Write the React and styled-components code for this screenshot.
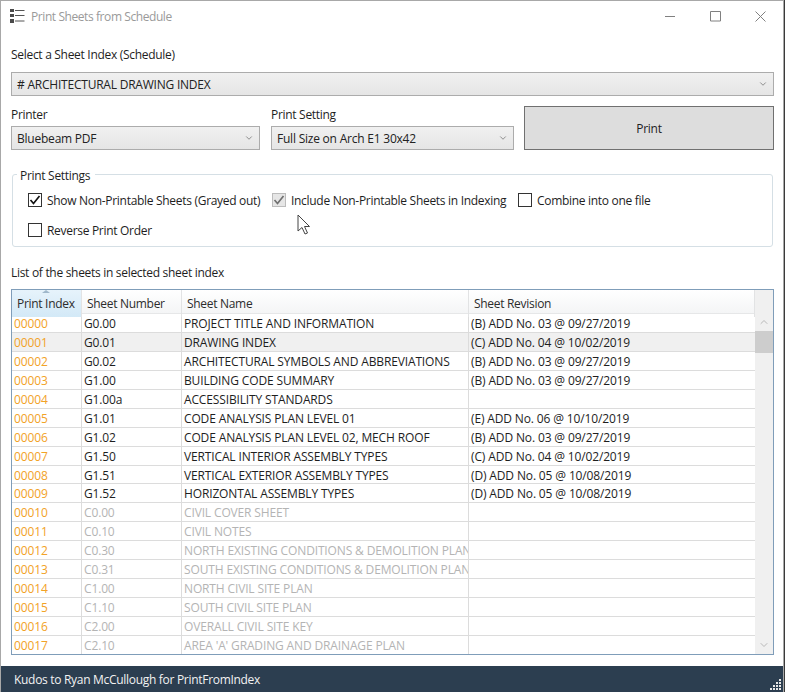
import React from 'react';
import styled, { createGlobalStyle } from 'styled-components';
import { ChevronDown, ChevronUp } from 'lucide-react';

const GlobalStyle = createGlobalStyle`
    html, body {
        margin: 0;
        padding: 0;
        background: #3a3a3a;
    }
    body {
        font-family: "Open Sans", "Liberation Sans", sans-serif;
        font-size: 12px;
        color: #1e1e1e;
    }
`;

const Frame = styled.div`
    width: 784px;
    height: 692px;
    box-sizing: border-box;
    border: 1px solid #a8a8a8;
    border-bottom: 0;
    background: #fff;
    display: flex;
    flex-direction: column;
    position: relative;
    overflow: hidden;
`;
const TitleBar = styled.div`
    height: 30px;
    flex: none;
    display: flex;
    align-items: center;
    padding-left: 9px;
`;
const TitleText = styled.span`
    margin-left: 6px;
    color: #9a9a9a;
    letter-spacing: -0.42px;
`;
const WinButtons = styled.div`
    margin-left: auto;
    display: flex;
`;
const WinButton = styled.div`
    width: 45px;
    height: 30px;
    display: flex;
    align-items: center;
    justify-content: center;
`;
const Body = styled.div`
    flex: 1;
    min-height: 0;
    padding: 15px 9px 10px 10px;
    display: flex;
    flex-direction: column;
`;
const Label = styled.div`
    height: 17px;
    line-height: 17px;
    letter-spacing: -0.3px;
`;
const Select = styled.div`
    box-sizing: border-box;
    height: 24px;
    flex: none;
    margin-top: ${p => p.$top || 0}px;
    width: ${p => p.$width ? `${p.$width}px` : '100%'};
    border: 1px solid #acacac;
    background: linear-gradient(#f0f0f0, #e5e5e5);
    display: flex;
    align-items: center;
    padding: 0 5px;
    letter-spacing: -0.22px;
    justify-content: space-between;
    color: #222;
`;
const TopRow = styled.div`
    display: flex;
    margin-top: 10px;
    gap: 11px;
    align-items: flex-end;
`;
const Field = styled.div`
    display: flex;
    flex-direction: column;
    gap: 3px;
`;
const PrintButton = styled.div`
    box-sizing: border-box;
    margin-left: -1px;
    width: 250px;
    height: 44px;
    background: #dddddd;
    border: 1px solid #707070;
    display: flex;
    align-items: center;
    justify-content: center;
    letter-spacing: -0.3px;
`;
const GroupBox = styled.fieldset`
    margin: 16px 1px 0 1px;
    padding: 0 0 0 15px;
    height: 81px;
    box-sizing: border-box;
    border: 1px solid #d5dfe5;
    border-radius: 3px;
`;
const Legend = styled.legend`
    margin-left: -11px;
    padding: 3px 5px 0 3px;
    line-height: 14px;
    letter-spacing: -0.3px;
`;
const CheckRow = styled.div`
    display: flex;
    align-items: center;
    height: 16px;
    margin-top: ${p => p.$top}px;
`;
const Check = styled.div`
    display: flex;
    align-items: center;
    width: ${p => p.$width}px;
    letter-spacing: -0.3px;
`;
const Box = styled.span`
    box-sizing: border-box;
    width: 14px;
    height: 14px;
    flex: none;
    margin-right: 5px;
    border: 1px solid ${p => p.$disabled ? '#bcbcbc' : '#333'};
    background: ${p => p.$disabled ? '#e6e6e6' : '#fff'};
    color: ${p => p.$disabled ? '#707070' : '#111'};
    display: flex;
    align-items: center;
    justify-content: center;
`;
const ListLabel = styled(Label)`
    margin-top: 17px;
`;
const Grid = styled.div`
    margin-top: 8px;
    box-sizing: border-box;
    height: 366px;
    flex: none;
    border: 1px solid #7f9db9;
    display: flex;
    position: relative;
    overflow: hidden;
`;
const Table = styled.div`
    flex: 1;
    min-width: 0;
`;
const columns = '70px 100px 287px 1fr';
const HeaderRow = styled.div`
    display: grid;
    grid-template-columns: ${columns};
    height: 23px;
    background: linear-gradient(#ffffff, #f4f5f6);
    border-bottom: 1px solid #e6e7e8;
`;
const HeaderCell = styled.div`
    position: relative;
    padding-left: 5px;
    line-height: 27px;
    color: #2c2c2c;
    letter-spacing: -0.3px;
    border-right: 1px solid #e2e3e4;
    background: ${p => p.$sorted ? 'linear-gradient(#e6f3fb, #d3e9f7)' : 'none'};
`;
const SortMark = styled.span`
    position: absolute;
    left: 30px;
    top: 0;
    width: 0;
    height: 0;
    border-left: 4px solid transparent;
    border-right: 4px solid transparent;
    border-bottom: 3px solid #9fb8cb;
`;
const Row = styled.div`
    display: grid;
    grid-template-columns: ${columns};
    height: 18.94px;
    box-sizing: border-box;
    border-bottom: 1px solid #dcdcdc;
    background: ${p => p.$active ? '#f0f0f0' : '#fff'};
    color: ${p => p.$muted ? '#b4b4b4' : '#1e1e1e'};
`;
const Cell = styled.div`
    padding-left: 2px;
    line-height: 19px;
    white-space: nowrap;
    overflow: hidden;
    letter-spacing: -0.14px;
    border-right: ${p => p.$last ? 0 : '1px solid #dcdcdc'};
`;
const IndexCell = styled(Cell)`
    color: #f2a227;
`;
const ScrollBar = styled.div`
    width: 18px;
    flex: none;
    background: #f0f0f0;
    display: flex;
    flex-direction: column;
    align-items: center;
    color: #a6a6a6;
`;
const ScrollCap = styled.div`
    height: 18px;
    flex: none;
    margin-top: ${p => p.$top || 0}px;
    display: flex;
    align-items: center;
    justify-content: center;
`;
const ScrollThumb = styled.div`
    width: 100%;
    height: 22px;
    flex: none;
    background: #cdcdcd;
`;
const ScrollTrack = styled.div`
    flex: 1;
`;
const Footer = styled.div`
    height: 26px;
    flex: none;
    background: #2c3e50;
    color: #f2f2f2;
    display: flex;
    align-items: center;
    padding-left: 13px;
    letter-spacing: -0.3px;
    position: relative;
`;
const Grip = styled.svg`
    position: absolute;
    right: 1px;
    bottom: 1px;
`;
const Pointer = styled.svg`
    position: absolute;
    left: 296px;
    top: 213px;
`;

const sheets = [
    ['G0.00', 'PROJECT TITLE AND INFORMATION', '(B) ADD No. 03 @ 09/27/2019'],
    ['G0.01', 'DRAWING INDEX', '(C) ADD No. 04 @ 10/02/2019'],
    ['G0.02', 'ARCHITECTURAL SYMBOLS AND ABBREVIATIONS', '(B) ADD No. 03 @ 09/27/2019'],
    ['G1.00', 'BUILDING CODE SUMMARY', '(B) ADD No. 03 @ 09/27/2019'],
    ['G1.00a', 'ACCESSIBILITY STANDARDS', ''],
    ['G1.01', 'CODE ANALYSIS PLAN LEVEL 01', '(E) ADD No. 06 @ 10/10/2019'],
    ['G1.02', 'CODE ANALYSIS PLAN LEVEL 02, MECH ROOF', '(B) ADD No. 03 @ 09/27/2019'],
    ['G1.50', 'VERTICAL INTERIOR ASSEMBLY TYPES', '(C) ADD No. 04 @ 10/02/2019'],
    ['G1.51', 'VERTICAL EXTERIOR ASSEMBLY TYPES', '(D) ADD No. 05 @ 10/08/2019'],
    ['G1.52', 'HORIZONTAL ASSEMBLY TYPES', '(D) ADD No. 05 @ 10/08/2019'],
    ['C0.00', 'CIVIL COVER SHEET', ''],
    ['C0.10', 'CIVIL NOTES', ''],
    ['C0.30', 'NORTH EXISTING CONDITIONS & DEMOLITION PLAN', ''],
    ['C0.31', 'SOUTH EXISTING CONDITIONS & DEMOLITION PLAN', ''],
    ['C1.00', 'NORTH CIVIL SITE PLAN', ''],
    ['C1.10', 'SOUTH CIVIL SITE PLAN', ''],
    ['C2.00', 'OVERALL CIVIL SITE KEY', ''],
    ['C2.10', "AREA 'A' GRADING AND DRAINAGE PLAN", ''],
];

const AppIcon = () => (
    <svg width="15" height="14" viewBox="0 0 15 14">
        <rect x="0" y="0" width="4" height="3" fill="#4a4a4a" />
        <rect x="0" y="5" width="4" height="3" fill="#4a4a4a" />
        <rect x="0" y="10" width="4" height="4" fill="#4a4a4a" />
        <path d="M5 1.5h9.5M5 6.5h9.5M5 12h9.5" stroke="#555" strokeWidth="1" />
    </svg>
);

const WinIcon = ({ d }) => (
    <svg width="11" height="11" viewBox="0 0 11 11">
        <path d={d} fill="none" stroke="#808080" strokeWidth="1" />
    </svg>
);

const Tick = () => (
    <svg width="12" height="12" viewBox="0 0 12 12">
        <path d="M1.5 6 4.5 9.5 10.5 2" fill="none" stroke="currentColor" strokeWidth="1.7" />
    </svg>
);

const Chevron = () => <ChevronDown size={10} strokeWidth={1.5} color="#555" />;

const CheckItem = ({ width, checked, disabled, children }) => (
    <Check $width={width}>
        <Box $disabled={disabled}>{checked && <Tick />}</Box>
        {children}
    </Check>
);

const App = () => {
    return (
        <Frame>
            <GlobalStyle />
            <TitleBar>
                <AppIcon />
                <TitleText>Print Sheets from Schedule</TitleText>
                <WinButtons>
                    <WinButton><WinIcon d="M0 5.5h10" /></WinButton>
                    <WinButton><WinIcon d="M.5.5h10v9.5H.5z" /></WinButton>
                    <WinButton><WinIcon d="M.5.5l10 10M10.5.5l-10 10" /></WinButton>
                </WinButtons>
            </TitleBar>
            <Body>
                <Label>Select a Sheet Index (Schedule)</Label>
                <Select $top={9}>
                    # ARCHITECTURAL DRAWING INDEX
                    <Chevron />
                </Select>
                <TopRow>
                    <Field>
                        <Label>Printer</Label>
                        <Select $width={249}>Bluebeam PDF<Chevron /></Select>
                    </Field>
                    <Field>
                        <Label>Print Setting</Label>
                        <Select $width={243}>Full Size on Arch E1 30x42<Chevron /></Select>
                    </Field>
                    <PrintButton>Print</PrintButton>
                </TopRow>
                <GroupBox>
                    <Legend>Print Settings</Legend>
                    <CheckRow $top={9}>
                        <CheckItem width={244} checked>Show Non-Printable Sheets (Grayed out)</CheckItem>
                        <CheckItem width={246} checked disabled>Include Non-Printable Sheets in Indexing</CheckItem>
                        <CheckItem width={200}>Combine into one file</CheckItem>
                    </CheckRow>
                    <CheckRow $top={14}>
                        <CheckItem width={200}>Reverse Print Order</CheckItem>
                    </CheckRow>
                </GroupBox>
                <ListLabel>List of the sheets in selected sheet index</ListLabel>
                <Grid>
                    <Table>
                        <HeaderRow>
                            <HeaderCell $sorted>Print Index<SortMark /></HeaderCell>
                            <HeaderCell>Sheet Number</HeaderCell>
                            <HeaderCell>Sheet Name</HeaderCell>
                            <HeaderCell>Sheet Revision</HeaderCell>
                        </HeaderRow>
                        {sheets.map(([number, name, revision], i) => (
                            <Row key={number} $active={i === 1} $muted={i >= 10}>
                                <IndexCell>{String(i).padStart(5, '0')}</IndexCell>
                                <Cell>{number}</Cell>
                                <Cell>{name}</Cell>
                                <Cell $last>{revision}</Cell>
                            </Row>
                        ))}
                    </Table>
                    <ScrollBar>
                        <ScrollCap $top={23}><ChevronUp size={12} strokeWidth={1.5} /></ScrollCap>
                        <ScrollThumb />
                        <ScrollTrack />
                        <ScrollCap><ChevronDown size={12} strokeWidth={1.5} /></ScrollCap>
                    </ScrollBar>
                </Grid>
            </Body>
            <Footer>
                Kudos to Ryan McCullough for PrintFromIndex
                <Grip width="12" height="12" viewBox="0 0 12 12" fill="#e6e6e6">
                    <rect x="9" y="0" width="2" height="2" />
                    <rect x="6" y="3" width="2" height="2" />
                    <rect x="9" y="3" width="2" height="2" />
                    <rect x="3" y="6" width="2" height="2" />
                    <rect x="6" y="6" width="2" height="2" />
                    <rect x="9" y="6" width="2" height="2" />
                    <rect x="0" y="9" width="2" height="2" />
                    <rect x="3" y="9" width="2" height="2" />
                    <rect x="6" y="9" width="2" height="2" />
                    <rect x="9" y="9" width="2" height="2" />
                </Grip>
            </Footer>
            <Pointer width="14" height="22" viewBox="0 0 14 22">
                <path d="M1 1v16l4-3.5 3 6.5 2.5-1-3-6.5H12.5z" fill="#fff" stroke="#444" strokeWidth="1" />
            </Pointer>
        </Frame>
    );
};

export default App;
